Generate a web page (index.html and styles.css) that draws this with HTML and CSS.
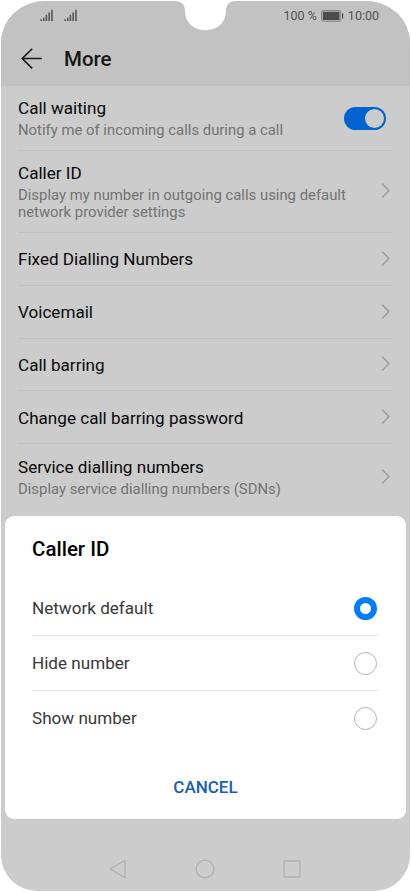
FILE: index.html
```html
<!DOCTYPE html>
<html lang="en">
<head>
<meta charset="utf-8">
<meta name="viewport" content="width=device-width, initial-scale=1">
<title>More</title>
<link rel="stylesheet" href="styles.css">
</head>
<body>
<svg class="defs" width="0" height="0" aria-hidden="true">
  <symbol id="chevron" viewBox="0 0 10 16"><path d="M1 .6 8 7.600 1 14.600" fill="none" stroke="#a0a0a0" stroke-width="1.500"/></symbol>
  <symbol id="signal" viewBox="0 0 13 12"><path d="M.4 10.300h1.500V12H.4zM3 8.700h1.500V12H3zM5.700 6h1.500v6H5.700zM8.400 3.400h1.500V12H8.400zM11.200.7h1.500V12h-1.500z" fill="#505050"/></symbol>
</svg>
<div class="phone">
  <svg class="notch" viewBox="0 0 62 31" aria-hidden="true"><path d="M0 0V1C8 1 11 5 11 10.500 11 22 19 30.200 31.500 30.200S52 22 52 10.500C52 5 55 1 62 1V0Z" fill="#fff"/></svg>
  <header class="top">
    <div class="status">
      <div class="signals">
        <svg width="13" height="12"><use href="#signal"/></svg>
        <svg width="13" height="12"><use href="#signal"/></svg>
      </div>
      <div class="power">
        <span class="percent">100 %</span>
        <svg width="23" height="12" viewBox="0 0 23 12"><rect x=".6" y=".6" width="19" height="10.600" rx="1.500" fill="none" stroke="#777" stroke-width=".9"/><path d="M1.800 1.800h16.600v8.200H1.800zM21 3.200h1.200v5.400H21z" fill="#4c4c4c"/></svg>
        <span class="clock">10:00</span>
      </div>
    </div>
    <div class="appbar">
      <svg width="22" height="22" viewBox="0 0 22 22"><path d="M20.800 10.500H1.200M11.200.7 1.200 10.500l10 9.900" fill="none" stroke="#181818" stroke-width="1.600"/></svg>
      <h1>More</h1>
    </div>
  </header>
  <main class="list">
    <div class="row waiting"><div class="label"><div class="title">Call waiting</div><div class="sub">Notify me of incoming calls during a call</div></div><span class="switch"></span></div>
    <div class="row caller"><div class="label"><div class="title">Caller ID</div><div class="sub">Display my number in outgoing calls using default<br>network provider settings</div></div><svg class="chev"><use href="#chevron"/></svg></div>
    <div class="row"><div class="title">Fixed Dialling Numbers</div><svg class="chev"><use href="#chevron"/></svg></div>
    <div class="row"><div class="title">Voicemail</div><svg class="chev"><use href="#chevron"/></svg></div>
    <div class="row"><div class="title">Call barring</div><svg class="chev"><use href="#chevron"/></svg></div>
    <div class="row"><div class="title">Change call barring password</div><svg class="chev"><use href="#chevron"/></svg></div>
    <div class="row service"><div class="label"><div class="title">Service dialling numbers</div><div class="sub">Display service dialling numbers (SDNs)</div></div><svg class="chev"><use href="#chevron"/></svg></div>
  </main>
  <section class="sheet" role="dialog" aria-label="Caller ID">
    <h2>Caller ID</h2>
    <div class="option"><span>Network default</span><i class="radio on"></i></div>
    <div class="option"><span>Hide number</span><i class="radio"></i></div>
    <div class="option"><span>Show number</span><i class="radio"></i></div>
    <button>CANCEL</button>
  </section>
  <nav class="nav">
    <svg width="20" height="20" viewBox="0 0 20 20"><path d="M17 1.400v17.200L2 10Z"/></svg>
    <svg width="20" height="20" viewBox="0 0 20 20"><circle cx="10" cy="10" r="8.900"/></svg>
    <svg width="20" height="20" viewBox="0 0 20 20"><rect x="2" y="2" width="16" height="16" rx=".6"/></svg>
  </nav>
</div>
</body>
</html>
```
FILE: styles.css
```css
* { box-sizing: border-box; }
body { margin: 0; background: #fff; font-family: Roboto, "Liberation Sans", sans-serif; color: #080808; }
.defs { position: absolute; }
.phone {
  position: relative; width: 409px; height: 890px; margin: 1px 1px 0;
  display: flex; flex-direction: column; overflow: hidden;
  background: #ccc; border-radius: 44px 44px 36px 36px / 42px 42px 36px 36px;
}
.notch { position: absolute; left: 173px; top: -1px; width: 62px; height: 31px; }
.top { height: 85px; background: #c2c2c2; flex: none; }
.status { height: 30px; display: flex; justify-content: space-between; padding: 8px 31px 0 39px; }
.signals { display: flex; gap: 11px; }
.power { display: flex; height: 14px; align-items: center; font-size: 12.500px; line-height: 14px; color: #505050; }
.power svg { margin: 0 4px 0 4px; }
.appbar { display: flex; align-items: center; height: 55px; padding-left: 20px; gap: 21px; }
h1 { margin: 1px 0 0; font-size: 20.500px; line-height: 24px; font-weight: 500; color: #171717; }
.list { padding: 0 18px 0 17px; }
.row { display: flex; align-items: center; justify-content: space-between; height: 52.750px; padding: 1px 1px 0 0; border-bottom: 1px solid #c0c0c0; }
.row.waiting { height: 65px; padding-right: 6px; }
.row.caller { height: 82px; }
.row.service { height: 66px; border: 0; }
.title { font-size: 17.100px; line-height: 20px; white-space: nowrap; }
.label { padding-bottom: 1px; }
.sub { margin-top: 4px; margin-bottom: -1px; font-size: 14.860px; line-height: 17.500px; color: #737373; white-space: nowrap; }
.chev { width: 10px; height: 16px; margin-top: -1px; flex: none; }
.caller .chev, .service .chev { margin-top: -2px; }
.switch { width: 42px; height: 23px; margin-top: -1px; border-radius: 12px; background: #0163d2; display: flex; justify-content: flex-end; padding: 2px; }
.switch::after { content: ""; width: 19px; height: 19px; border-radius: 50%; background: #ccc; }
.sheet { position: absolute; left: 4px; top: 515px; width: 401px; height: 303px; padding: 20px 27px 0; background: #fff; border-radius: 9px; }
h2 { margin: 0; height: 45px; font-size: 20.500px; line-height: 26px; font-weight: 500; color: #000; }
.option { height: 55px; display: flex; align-items: center; justify-content: space-between; padding-right: 2px; font-size: 17.100px; color: #383838; border-bottom: 1px solid #e8e8e8; }
.option:last-of-type { border-bottom-color: transparent; }
.radio { width: 23px; height: 23px; border: 1px solid #b2b2b2; border-radius: 50%; }
.radio.on { border: 6px solid #007dff; }
button { display: block; margin: 29px auto 0; padding: 0; border: 0; background: none; font: 500 17px/24px Roboto, sans-serif; color: #1261b5; }
.nav { margin-top: auto; height: 32px; padding-right: 1px; display: flex; justify-content: center; gap: 67px; }
.nav svg { fill: none; stroke: #b0b0b0; stroke-width: 1.300; stroke-linejoin: round; }
```
